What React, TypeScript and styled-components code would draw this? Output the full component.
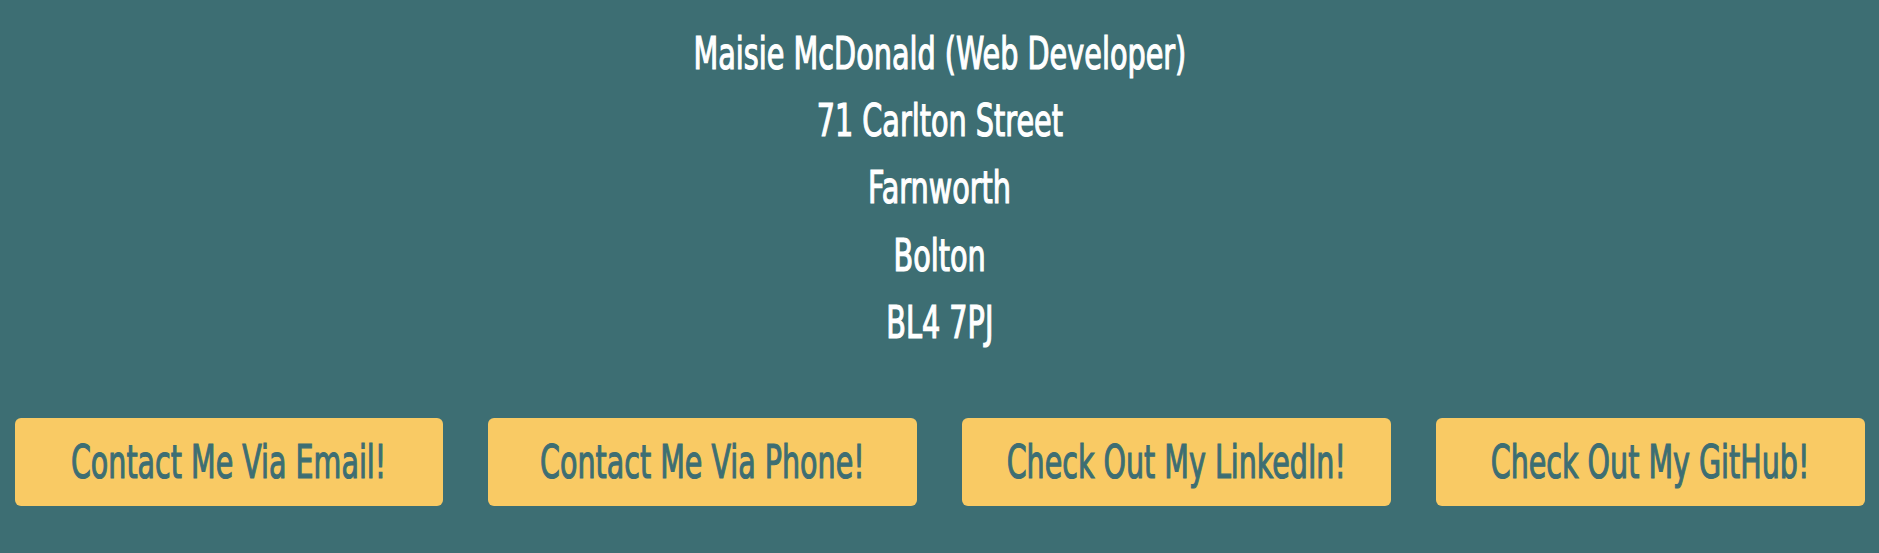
import React from "react";
import styled, { createGlobalStyle } from "styled-components";

const Global = createGlobalStyle`
  html, body { margin: 0; padding: 0; }
  body {
    background: #3d6e73;
    min-height: 100vh;
    font-family: "DejaVu Sans Condensed", "Liberation Sans Narrow", "Liberation Sans", sans-serif;
  }
`;

const Page = styled.main`
  display: flex;
  flex-direction: column;
  align-items: center;
  padding: 19.5px 0 0;
`;

const Address = styled.address`
  display: flex;
  flex-direction: column;
  align-items: center;
  font-style: normal;
`;

const Line = styled.p`
  margin: 0;
  color: #ffffff;
  font-size: 44px;
  font-weight: 400;
  line-height: 67.4px;
  white-space: nowrap;
  -webkit-text-stroke: 1.2px currentColor;
`;

const Narrow = styled.span<{ $scale: number }>`
  display: inline-block;
  transform: scaleX(${(p) => p.$scale});
  transform-origin: center;
`;

const Buttons = styled.nav`
  align-self: stretch;
  display: grid;
  grid-template-columns: repeat(4, minmax(0, 1fr));
  column-gap: 45.5px;
  padding: 0 14.5px;
  margin-top: 61px;
`;

const Button = styled.a`
  display: flex;
  align-items: center;
  justify-content: center;
  min-width: 0;
  height: 88px;
  background: #f9ca64;
  border-radius: 6px;
  color: #3d6e73;
  font-size: 47px;
  font-weight: 400;
  text-decoration: none;
  white-space: nowrap;
  -webkit-text-stroke: 1.2px currentColor;
`;

const lines = [
  "Maisie McDonald (Web Developer)",
  "71 Carlton Street",
  "Farnworth",
  "Bolton",
  "BL4 7PJ",
];

const buttons = [
  "Contact Me Via Email!",
  "Contact Me Via Phone!",
  "Check Out My LinkedIn!",
  "Check Out My GitHub!",
];

export default function App() {
  return (
    <>
      <Global />
      <Page>
        <Address>
          {lines.map((l) => (
            <Line key={l}>
              <Narrow $scale={0.725}>{l}</Narrow>
            </Line>
          ))}
        </Address>
        <Buttons>
          {buttons.map((b) => (
            <Button key={b} href="#">
              <Narrow $scale={0.675}>{b}</Narrow>
            </Button>
          ))}
        </Buttons>
      </Page>
    </>
  );
}
